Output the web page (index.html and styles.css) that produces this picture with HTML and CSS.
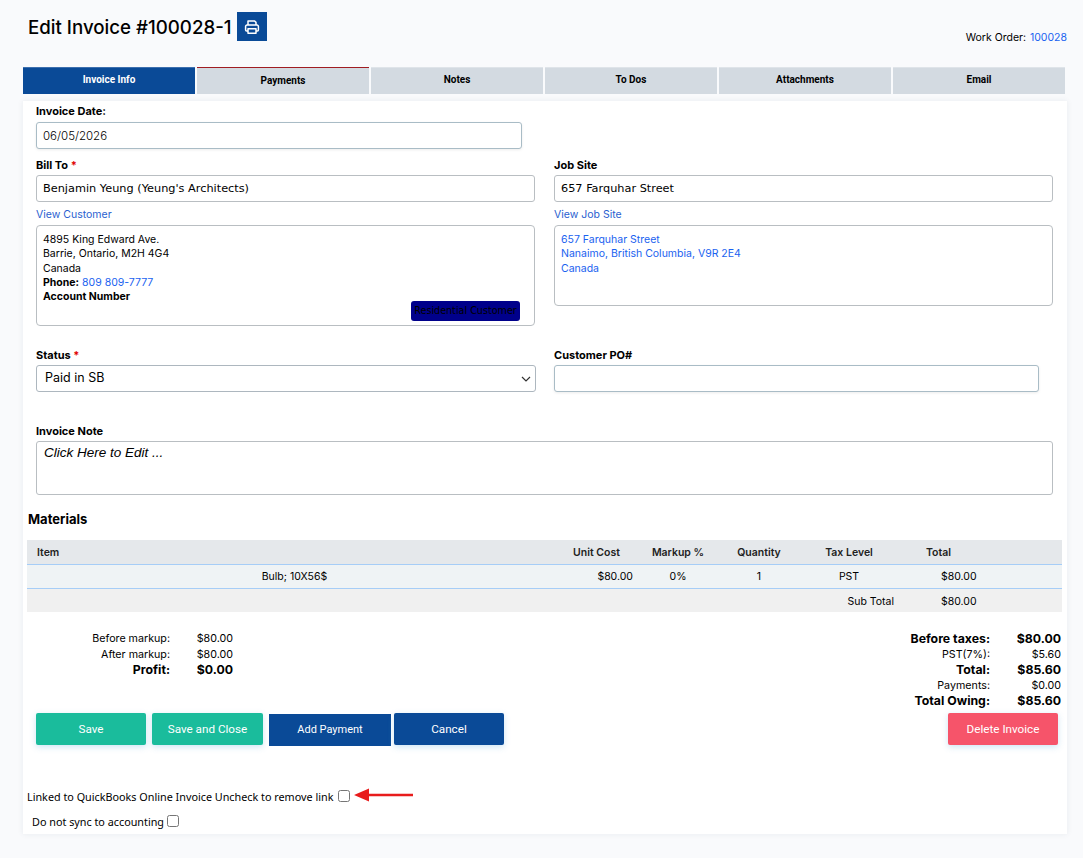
FILE: index.html
```html
<!DOCTYPE html>
<html lang="en">
<head>
    <meta charset="UTF-8">
    <meta name="viewport" content="width=device-width, initial-scale=1.0">
    <title>Edit Invoice</title>
    <link rel="stylesheet" href="styles.css">
</head>
<body>
    <!-- Header Start -->
    <header class="page-head">
        <div class="title-wrap">
            <h1>Edit Invoice #100028-1</h1>
            <button type="button" class="print-btn" aria-label="Print">
                <svg width="16" height="16" viewBox="0 0 16 16" fill="none" stroke="#ffffff" stroke-width="1.5" stroke-linejoin="round">
                    <path d="M4 6V2h6.6L12 3.4V6"/>
                    <path d="M4 12H2.6a1 1 0 0 1-1-1V7.4a1.4 1.4 0 0 1 1.4-1.4h10a1.4 1.4 0 0 1 1.4 1.4V11a1 1 0 0 1-1 1H12"/>
                    <path d="M4 9.8h8v4.4H4z"/>
                </svg>
            </button>
        </div>
        <p class="work-order">Work Order: <a href="#">100028</a></p>
    </header>
    <!-- Header End -->

    <nav class="tabs">
        <a href="#" class="tab active">Invoice Info</a>
        <a href="#" class="tab flagged">Payments</a>
        <a href="#" class="tab">Notes</a>
        <a href="#" class="tab">To Dos</a>
        <a href="#" class="tab">Attachments</a>
        <a href="#" class="tab">Email</a>
    </nav>

    <main class="card">
        <form class="invoice-form">
            <div class="date-group">
                <label for="invoiceDate">Invoice Date:</label>
                <input type="text" id="invoiceDate" class="field date-field" value="06/05/2026">
            </div>

            <div class="two-col">
                <div class="col">
                    <label for="billTo">Bill To <span class="req">*</span></label>
                    <input type="text" id="billTo" class="field dejavu" value="Benjamin Yeung (Yeung's Architects)">
                    <a href="#" class="view-link">View Customer</a>
                    <div class="address-box bill-box">
                        4895 King Edward Ave.<br>
                        Barrie, Ontario, M2H 4G4<br>
                        Canada<br>
                        <b>Phone:</b> <a href="#">809 809-7777</a><br>
                        <b>Account Number</b>
                        <span class="badge">Residential Customer</span>
                    </div>
                </div>
                <div class="col">
                    <label for="jobSite">Job Site</label>
                    <input type="text" id="jobSite" class="field dejavu" value="657 Farquhar Street">
                    <a href="#" class="view-link">View Job Site</a>
                    <div class="address-box site-box">
                        <a href="#">657 Farquhar Street<br>
                        Nanaimo, British Columbia, V9R 2E4<br>
                        Canada</a>
                    </div>
                </div>
            </div>

            <div class="two-col status-row">
                <div class="col">
                    <label for="status">Status <span class="req">*</span></label>
                    <select id="status" class="field status-select">
                        <option>Paid in SB</option>
                    </select>
                </div>
                <div class="col">
                    <label for="customerPo">Customer PO#</label>
                    <input type="text" id="customerPo" class="field po-field">
                </div>
            </div>

            <div class="note-group">
                <label>Invoice Note</label>
                <div class="note-box">Click Here to Edit ...</div>
            </div>
        </form>

        <section class="materials">
            <h2>Materials</h2>
            <table class="items">
                <colgroup>
                    <col class="c-item"><col class="c-unit"><col class="c-markup"><col class="c-qty"><col class="c-tax"><col class="c-total">
                </colgroup>
                <thead>
                    <tr>
                        <th class="left">Item</th>
                        <th class="unit-head">Unit Cost</th>
                        <th>Markup %</th>
                        <th>Quantity</th>
                        <th>Tax Level</th>
                        <th class="total-head">Total</th>
                    </tr>
                </thead>
                <tbody>
                    <tr>
                        <td>Bulb; 10X56$</td>
                        <td class="unit-val">$80.00</td>
                        <td>0%</td>
                        <td>1</td>
                        <td>PST</td>
                        <td class="total-val">$80.00</td>
                    </tr>
                </tbody>
                <tfoot>
                    <tr>
                        <td colspan="4"></td>
                        <td class="sub-label">Sub Total</td>
                        <td class="total-val">$80.00</td>
                    </tr>
                </tfoot>
            </table>

            <div class="summary">
                <dl class="sum-list profit">
                    <dt>Before markup:</dt><dd>$80.00</dd>
                    <dt>After markup:</dt><dd>$80.00</dd>
                    <dt class="strong">Profit:</dt><dd class="strong">$0.00</dd>
                </dl>
                <dl class="sum-list totals">
                    <dt class="strong">Before taxes:</dt><dd class="strong">$80.00</dd>
                    <dt>PST(7%):</dt><dd>$5.60</dd>
                    <dt class="strong">Total:</dt><dd class="strong">$85.60</dd>
                    <dt>Payments:</dt><dd>$0.00</dd>
                    <dt class="strong">Total Owing:</dt><dd class="strong">$85.60</dd>
                </dl>
            </div>
        </section>

        <div class="actions">
            <button type="button" class="btn green">Save</button>
            <button type="button" class="btn green wide">Save and Close</button>
            <button type="button" class="btn navy pay">Add Payment</button>
            <button type="button" class="btn navy">Cancel</button>
            <button type="button" class="btn red">Delete Invoice</button>
        </div>

        <div class="sync-row linked">
            <label for="qbLink">Linked to QuickBooks Online Invoice Uncheck to remove link</label>
            <input type="checkbox" id="qbLink">
            <svg class="arrow" width="60" height="16" viewBox="0 0 60 16">
                <path d="M0 8 15 1.5V6.8H59V9.2H15V14.500z" fill="#e81c1c"/>
            </svg>
        </div>
        <div class="sync-row no-sync">
            <label for="noSync">Do not sync to accounting</label>
            <input type="checkbox" id="noSync">
        </div>
    </main>
</body>
</html>
```

FILE: styles.css
```css
* {
    box-sizing: border-box;
    margin: 0;
    padding: 0;
}

body {
    background-color: #f9fafc;
    color: #000000;
    font-family: Inter, "Open Sans", sans-serif;
    font-size: 11px;
    padding: 0 16px 24px 23px;
}

a {
    color: #1a62f0;
    text-decoration: none;
}

/* Header */
.page-head {
    display: flex;
    justify-content: space-between;
    height: 67px;
}

.title-wrap {
    display: flex;
    align-items: flex-start;
    gap: 5px;
    padding: 12px 0 0 5px;
}

h1 {
    width: 204px;
    font-size: 18.7px;
    font-weight: 500;
    line-height: 30px;
    padding-top: 1px;
    white-space: nowrap;
}

.print-btn {
    display: flex;
    align-items: center;
    justify-content: center;
    width: 30px;
    height: 29px;
    background-color: #0a4a97;
    border: none;
}

.work-order {
    font-size: 10.5px;
    line-height: 14px;
    padding-top: 31px;
}

.work-order a {
    margin-left: 1px;
}

/* Tabs */
.tabs {
    display: flex;
    gap: 2px;
    width: 1042px;
    height: 27px;
}

.tab {
    flex: 1;
    display: flex;
    align-items: center;
    justify-content: center;
    background-color: #d3dae1;
    border-top: 1px solid #dfe4e9;
    color: #000000;
    font-family: Roboto, sans-serif;
    font-size: 10px;
    font-weight: 700;
    padding-bottom: 3px;
}

.tab.active {
    background-color: #0a4a97;
    border-top-color: #3d6fae;
    color: #ffffff;
}

.tab.flagged {
    border-top-color: #a01c22;
    padding-bottom: 1px;
}

/* Card */
.card {
    background-color: #ffffff;
    box-shadow: 0 0 6px rgba(40, 60, 90, 0.08);
    margin-top: 7px;
    padding-bottom: 5px;
}

.invoice-form {
    padding: 3px 14px 0 13px;
}

.invoice-form label {
    display: block;
    font-weight: 700;
    font-size: 11px;
    line-height: 14px;
    margin-bottom: 3px;
}

.req {
    color: #e00000;
}

.field {
    display: block;
    width: 100%;
    height: 27px;
    background-color: #ffffff;
    border: 1px solid #b9bec2;
    border-radius: 3px;
    color: #000000;
    font-family: Inter, sans-serif;
    font-size: 12px;
    padding: 0 6px;
    outline: none;
}

.dejavu {
    font-family: "DejaVu Sans", sans-serif;
    font-size: 11.3px;
}

.date-group {
    width: 486px;
    margin-bottom: 9px;
}

.date-group label {
    margin-bottom: 4px;
}

.date-field {
    border-color: #a9bcc6;
    box-shadow: 0 1px 3px rgba(0, 0, 0, 0.08);
    font-size: 11.5px;
    font-weight: 300;
}

.two-col {
    display: grid;
    grid-template-columns: 499px 499px;
    column-gap: 19px;
}

.view-link {
    display: block;
    font-size: 10.5px;
    line-height: 14px;
    margin: 6px 0 3px;
    color: #2a5fd0;
}

.address-box {
    position: relative;
    border: 1px solid #b9bec2;
    border-radius: 4px;
    font-size: 10.5px;
    line-height: 14.3px;
    padding: 7px 6px 0;
}

.bill-box {
    height: 101px;
}

.site-box {
    height: 81px;
}

.badge {
    position: absolute;
    right: 14px;
    bottom: 4px;
    width: 109px;
    height: 20px;
    background-color: #00008b;
    border-radius: 3px;
    color: #000000;
    font-family: "DejaVu Sans", sans-serif;
    font-size: 9.6px;
    line-height: 20px;
    text-align: center;
    white-space: nowrap;
}

.status-row {
    margin-top: 22px;
}

.status-select {
    width: 500px;
    border-color: #adb7bf;
    font-size: 12.5px;
    padding: 0 4px 3px 8px;
    appearance: none;
    background-image: url("data:image/svg+xml,%3Csvg xmlns='http://www.w3.org/2000/svg' width='10' height='6'%3E%3Cpath d='M1 1l4 4 4-4' fill='none' stroke='%23333' stroke-width='1.2'/%3E%3C/svg%3E");
    background-repeat: no-repeat;
    background-position: right 4px center;
}

.po-field {
    width: 485px;
    border-color: #a9bcc6;
    box-shadow: 0 1px 3px rgba(0, 0, 0, 0.08);
}

.note-group {
    margin-top: 32px;
}

.note-box {
    height: 54px;
    border: 1px solid #b9bec2;
    border-radius: 3px;
    font-family: "Liberation Sans", sans-serif;
    font-size: 13.5px;
    font-style: italic;
    line-height: 16px;
    padding: 3px 7px;
}

/* Materials */
.materials {
    margin: 0 5px 0 4px;
}

h2 {
    font-size: 13px;
    font-weight: 700;
    line-height: 16px;
    margin: 16px 0 13px 1px;
}

.items {
    width: 100%;
    border-collapse: collapse;
    table-layout: fixed;
    font-size: 10.5px;
}

.c-item { width: 535px; }
.c-unit { width: 78px; }
.c-markup { width: 76px; }
.c-qty { width: 86px; }
.c-tax { width: 94px; }

.items th,
.items td {
    text-align: center;
    font-weight: 400;
    white-space: nowrap;
}

.items th {
    height: 24px;
    background-color: #e5e8eb;
    border-bottom: 1px solid #a6cdf7;
    color: #222222;
    font-weight: 600;
    padding-top: 1px;
}

.items th.left {
    text-align: left;
    padding-left: 10px;
}

.items th.unit-head {
    text-align: left;
    padding-left: 11px;
}

.items th.total-head {
    text-align: left;
    padding-left: 30px;
}

.items tbody td {
    height: 24px;
    background-color: #eff3f5;
    border-bottom: 1px solid #a6cdf7;
}

.items tfoot td {
    height: 24px;
    background-color: #f0f0f0;
    padding-top: 2px;
}

.items td.unit-val {
    text-align: right;
    padding-right: 7px;
}

.items td.total-val {
    text-align: left;
    padding-left: 45px;
}

.items td.sub-label {
    text-align: right;
    padding-right: 2px;
}

/* Summary */
.summary {
    display: flex;
    justify-content: space-between;
    align-items: flex-start;
    margin-top: 19px;
}

.sum-list {
    display: grid;
    align-items: center;
    font-size: 10.7px;
    line-height: 15.5px;
}

.sum-list dt,
.sum-list dd {
    text-align: right;
}

.sum-list .strong {
    font-size: 12.3px;
    font-weight: 700;
}

.profit {
    grid-template-columns: 144px 63px;
    margin-left: -1px;
}

.totals {
    grid-template-columns: 100px 71px;
    margin-right: 1px;
}

/* Buttons */
.actions {
    display: flex;
    align-items: flex-start;
    margin-top: 4px;
    padding-left: 13px;
}

.btn {
    width: 110px;
    height: 32px;
    border: none;
    border-radius: 2px;
    color: #ffffff;
    font-family: Roboto, sans-serif;
    font-size: 11.7px;
    box-shadow: 0 2px 6px rgba(90, 170, 220, 0.3);
}

.btn.green {
    background-color: #1abc9c;
    margin-right: 6px;
}

.btn.wide {
    width: 111px;
}

.btn.navy {
    background-color: #0a4a97;
}

.btn.pay {
    width: 122px;
    margin: 1px 3px 0 0;
    border-radius: 0;
    box-shadow: none;
    font-size: 11px;
}

.btn.red {
    margin-left: auto;
    margin-right: 9px;
    background-color: #f6546a;
}

/* Sync options */
.sync-row {
    display: flex;
    align-items: center;
    font-family: "Noto Sans", sans-serif;
    font-size: 10.8px;
    line-height: 14px;
}

.sync-row input {
    margin: 0;
    width: 12px;
    height: 12px;
}

.linked {
    height: 16px;
    margin-top: 42px;
    padding-left: 4px;
}

.linked label {
    margin-right: 5px;
    padding-top: 2px;
}

.arrow {
    margin: -2px 0 0 4px;
}

.no-sync {
    height: 16px;
    margin-top: 9px;
    padding-left: 9px;
}

.no-sync label {
    margin-right: 3px;
    padding-top: 2px;
}
```
